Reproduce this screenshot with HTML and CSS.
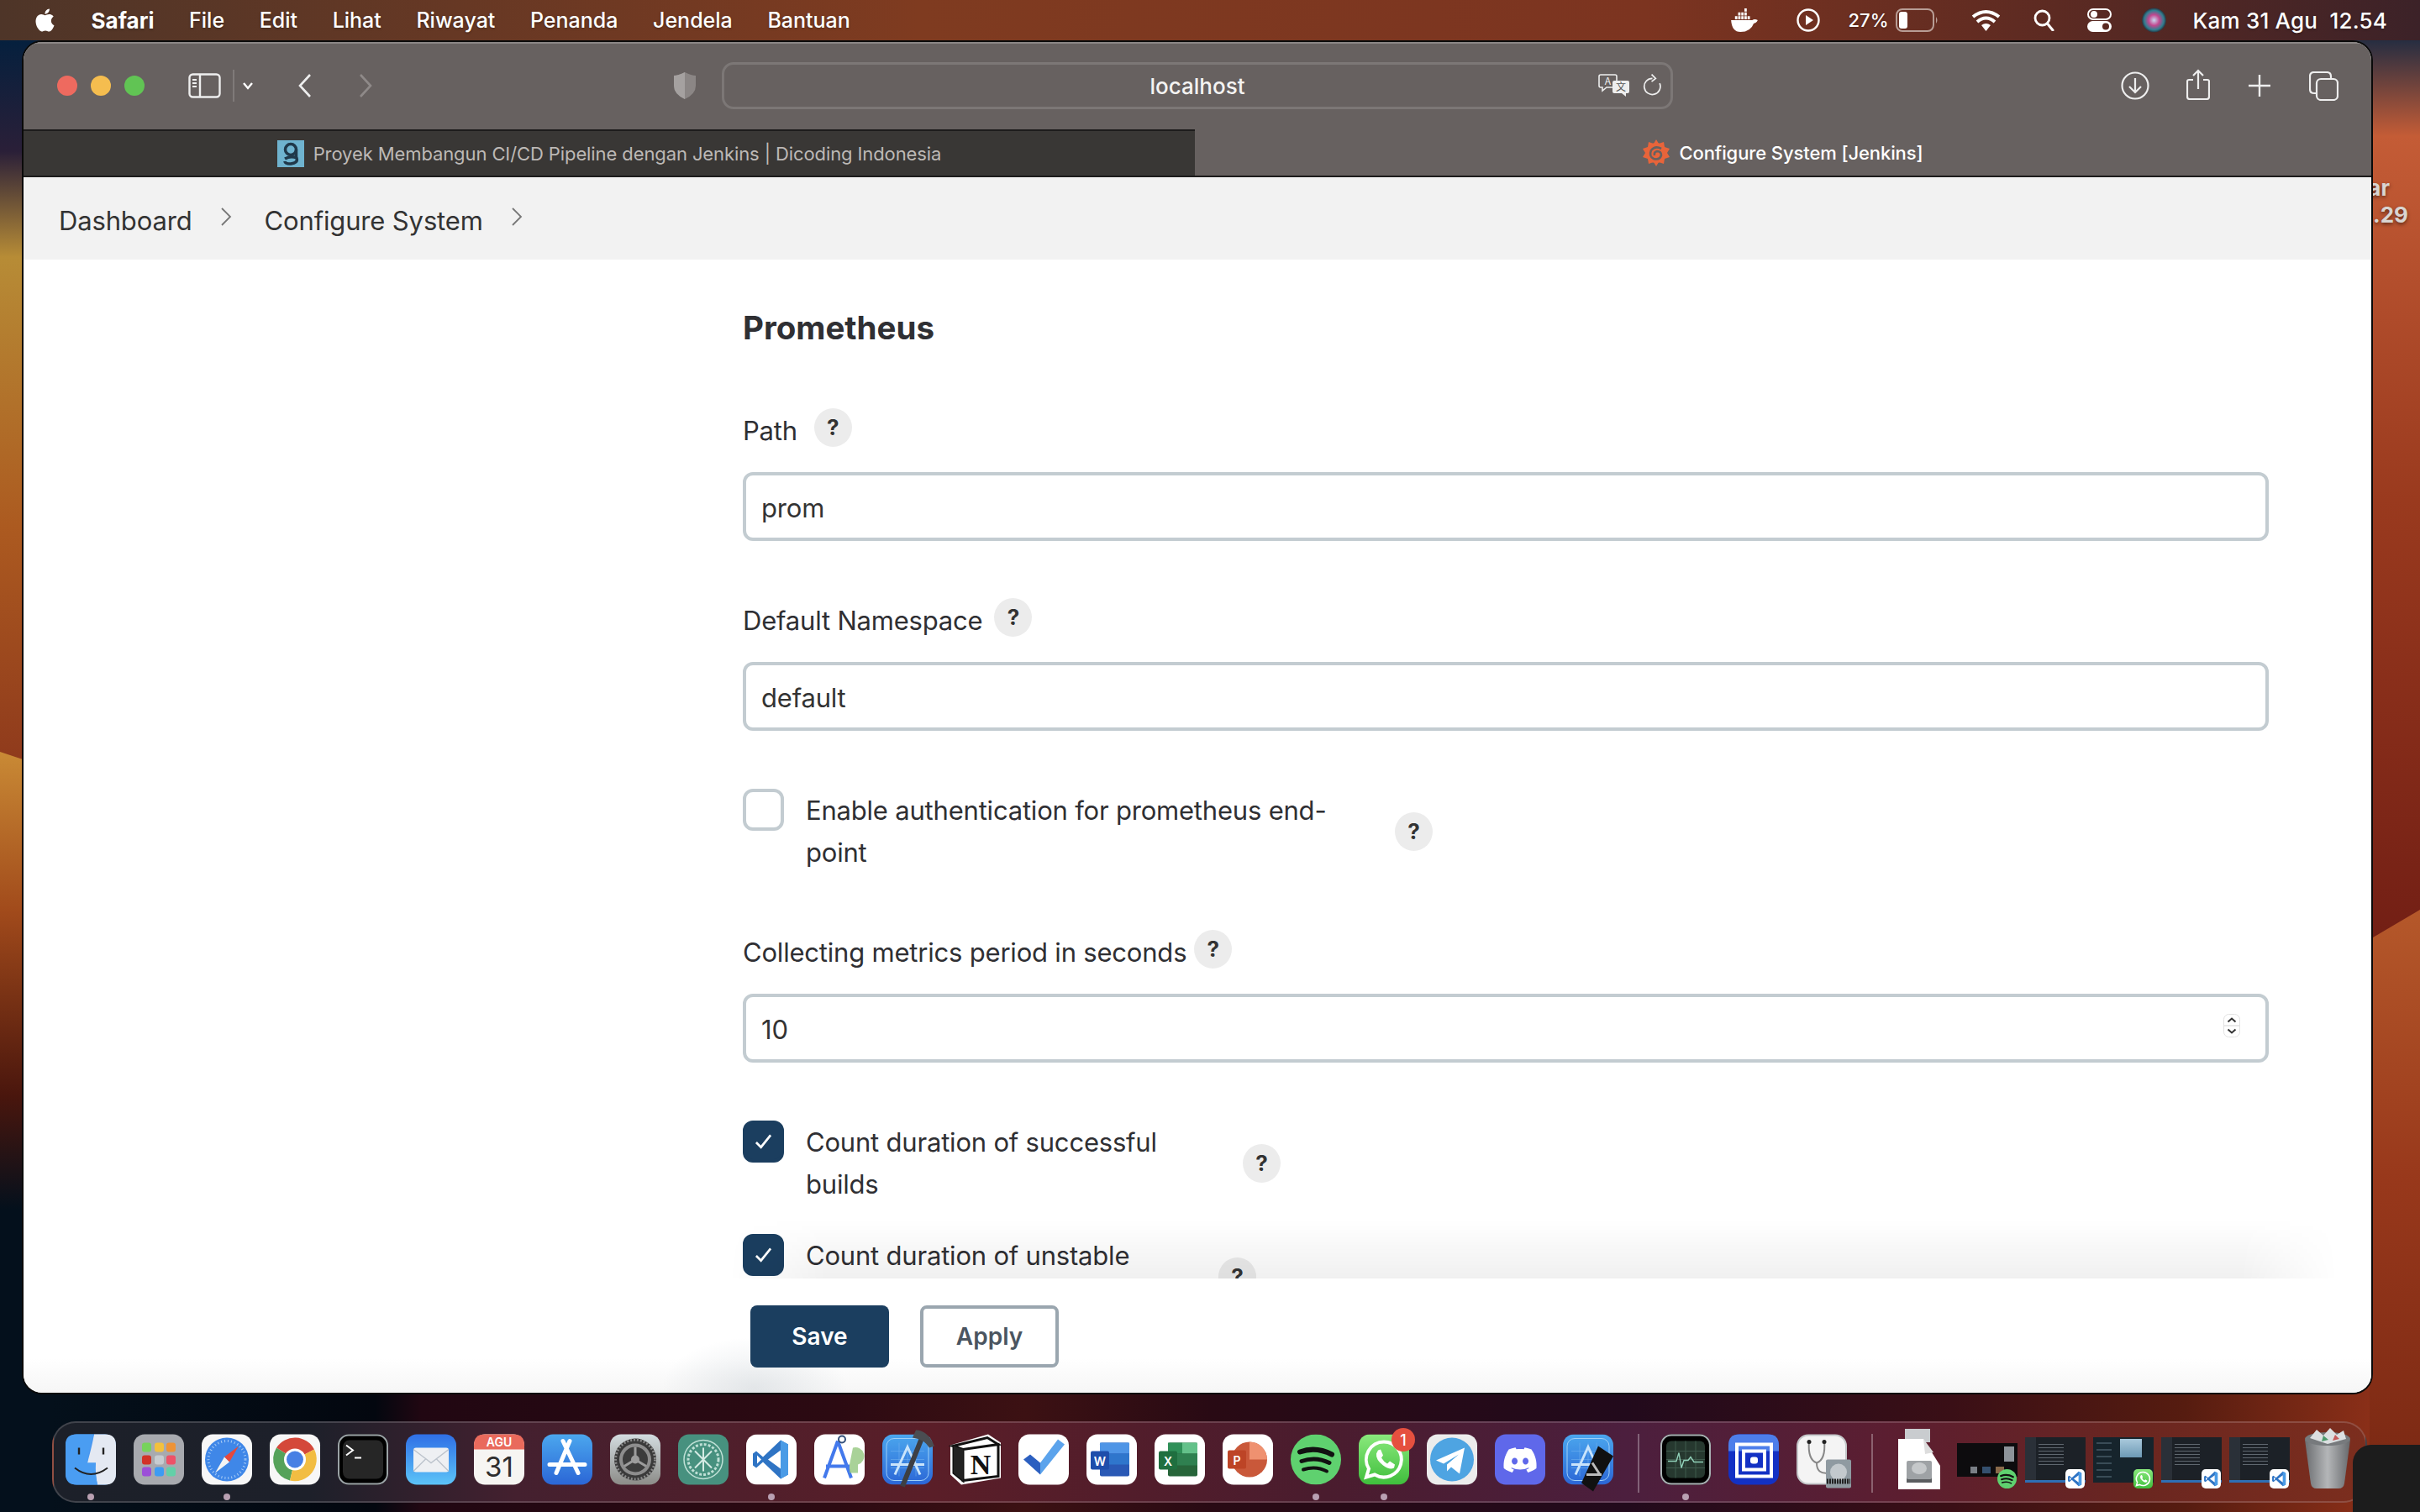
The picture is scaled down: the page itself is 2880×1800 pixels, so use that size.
FILE: index.html
```html
<!doctype html>
<html lang="en">
    <head>
        <meta charset="UTF-8" />
        <meta name="viewport" content="width=device-width, initial-scale=1.0" />
        <title>Configure System [Jenkins]</title>
        <link rel="stylesheet" href="styles.css">
    </head>
    <body>
        <!-- shared icons -->
        <svg class="sprite" width="0" height="0">
            <defs>
                <linearGradient id="blue-tile" x1="0" y1="0" x2="0" y2="1"><stop offset="0" stop-color="#4ba7ee"/><stop offset="1" stop-color="#2b66d6"/></linearGradient>
                <linearGradient id="wa-tile" x1="0" y1="0" x2="0" y2="1"><stop offset="0" stop-color="#8ae97d"/><stop offset="1" stop-color="#3fbe3c"/></linearGradient>
                <linearGradient id="mail-tile" x1="0" y1="0" x2="0" y2="1"><stop offset="0" stop-color="#2f6fe6"/><stop offset="1" stop-color="#5cc4f8"/></linearGradient>
                <linearGradient id="gear-tile" x1="0" y1="0" x2="0" y2="1"><stop offset="0" stop-color="#d3dce0"/><stop offset="1" stop-color="#8c8c88"/></linearGradient>
                <linearGradient id="can" x1="0" y1="0" x2="1" y2="0"><stop offset="0" stop-color="#6b6d70"/><stop offset=".5" stop-color="#b4b6b8"/><stop offset="1" stop-color="#66686b"/></linearGradient>
                <symbol id="i-vscode" viewBox="0 0 60 60">
                    <rect width="60" height="60" rx="13" fill="#fff"/>
                    <path d="M41 7 L50 12 V48 L41 53 L20 33 L12 40 L8 37 V23 L12 20 L20 27 Z" fill="#2f74c4"/>
                    <path d="M41 7 L50 12 V48 L41 53 V7 Z" fill="#4a9be6"/>
                    <path d="M41 19 V41 L26 30 Z" fill="#fff"/>
                    <path d="M13 25 V35 L18 30 Z" fill="#fff"/>
                </symbol>
                <symbol id="i-spotify" viewBox="0 0 60 60">
                    <circle cx="30" cy="30" r="30" fill="#5fd16f"/>
                    <path d="M11 21 Q30 14 49 24" fill="none" stroke="#111" stroke-width="6" stroke-linecap="round"/>
                    <path d="M13 32 Q30 26 46 34" fill="none" stroke="#111" stroke-width="5" stroke-linecap="round"/>
                    <path d="M15 42 Q30 37 43 44" fill="none" stroke="#111" stroke-width="4" stroke-linecap="round"/>
                </symbol>
                <symbol id="i-whatsapp" viewBox="0 0 60 60">
                    <rect width="60" height="60" rx="13" fill="url(#wa-tile)"/>
                    <path d="M30 9 A21 21 0 1 1 19 48 L9 51 L12 41 A21 21 0 0 1 30 9 Z" fill="none" stroke="#fff" stroke-width="4"/>
                    <path d="M23 19 L26 18 L29 25 L27 28 Q30 33 34 35 L37 32 L43 36 L42 40 Q37 43 29 37 Q20 30 21 23 Z" fill="#fff"/>
                </symbol>
                <symbol id="i-blueprint" viewBox="0 0 60 60">
                    <rect width="60" height="60" rx="13" fill="url(#blue-tile)"/>
                    <rect x="5" y="5" width="50" height="50" rx="9" fill="none" stroke="#9fd0f7" stroke-width="1"/>
                    <path d="M30 10 V50 M10 30 H50 M20 10 V50 M40 10 V50 M10 20 H50 M10 40 H50" stroke="#6fb0ee" stroke-width=".6"/>
                    <path d="M15 48 L30 15 L45 48 M10 36 H50" fill="none" stroke="#c9e4fb" stroke-width="3"/>
                </symbol>
            </defs>
        </svg>

        <!-- wallpaper -->
        <svg class="wallpaper" viewBox="0 0 2880 1800" preserveAspectRatio="none">
            <defs>
                <linearGradient id="wp-left" x1="0" y1="0" x2="0" y2="1"><stop offset="0" stop-color="#03203e"/><stop offset=".1" stop-color="#2a1f38"/><stop offset=".19" stop-color="#b78c36"/><stop offset=".42" stop-color="#ac5a20"/><stop offset=".62" stop-color="#8f3a1c"/></linearGradient>
                <linearGradient id="wp-left-low" x1="0" y1="0" x2="0" y2="1"><stop offset="0" stop-color="#c98a35"/><stop offset=".35" stop-color="#a14a1b"/><stop offset=".75" stop-color="#4a160d"/><stop offset="1" stop-color="#04101c"/></linearGradient>
                <linearGradient id="wp-right" x1="0" y1="0" x2="0" y2="1"><stop offset="0" stop-color="#1b2a42"/><stop offset=".11" stop-color="#c45c36"/><stop offset=".5" stop-color="#9a3a1e"/><stop offset="1" stop-color="#701d14"/></linearGradient>
                <linearGradient id="wp-right-low" x1="0" y1="0" x2="0" y2="1"><stop offset="0" stop-color="#b5582a"/><stop offset=".45" stop-color="#98381b"/><stop offset="1" stop-color="#772713"/></linearGradient>
                <linearGradient id="wp-bottom" x1="0" y1="0" x2="1" y2="0"><stop offset="0" stop-color="#04101b"/><stop offset=".14" stop-color="#03070f"/><stop offset=".16" stop-color="#210712"/><stop offset=".34" stop-color="#2c0a12"/><stop offset=".42" stop-color="#3c1113"/><stop offset=".5" stop-color="#290a14"/><stop offset=".68" stop-color="#220a1c"/><stop offset=".82" stop-color="#3a0f16"/><stop offset=".92" stop-color="#561c10"/><stop offset="1" stop-color="#8a2f18"/></linearGradient>
            </defs>
            <rect x="0" y="40" width="60" height="1400" fill="url(#wp-left)"/>
            <polygon points="0,895 60,915 60,1440 0,1440" fill="url(#wp-left-low)"/>
            <rect x="0" y="1440" width="60" height="360" fill="#04101c"/>
            <rect x="2780" y="40" width="100" height="1110" fill="url(#wp-right)"/>
            <polygon points="2780,1142 2880,1083 2880,1800 2780,1800" fill="url(#wp-right-low)"/>
            <rect x="60" y="1640" width="2760" height="160" fill="url(#wp-bottom)"/>
        </svg>

        <div class="desktop-label"><span>ar</span><span>.29</span></div>

        <header class="menubar">
            <nav class="menu">
                <svg class="apple" viewBox="0 0 24 24"><path fill="#fff" d="M12.152 6.896c-.948 0-2.415-1.078-3.96-1.04-2.04.027-3.91 1.183-4.961 3.014-2.117 3.675-.546 9.103 1.519 12.09 1.013 1.454 2.208 3.09 3.792 3.039 1.52-.065 2.09-.987 3.935-.987 1.831 0 2.35.987 3.96.948 1.637-.026 2.676-1.48 3.676-2.948 1.156-1.688 1.636-3.325 1.662-3.415-.039-.013-3.182-1.221-3.22-4.857-.026-3.04 2.48-4.494 2.597-4.559-1.429-2.09-3.623-2.324-4.39-2.376-2-.156-3.675 1.09-4.61 1.09zM15.53 3.83c.843-1.012 1.4-2.427 1.245-3.83-1.207.052-2.662.805-3.532 1.818-.78.896-1.454 2.338-1.273 3.714 1.338.104 2.715-.688 3.559-1.701"/></svg>
                <span class="menu-app">Safari</span>
                <span>File</span>
                <span>Edit</span>
                <span>Lihat</span>
                <span>Riwayat</span>
                <span>Penanda</span>
                <span>Jendela</span>
                <span>Bantuan</span>
            </nav>
            <div class="status">
                <svg class="st-docker" viewBox="0 0 36 30"><path fill="#fff" d="M1 15 H28 Q31 13 35 15 Q33 19 30 19 Q26 30 13 30 Q2 30 1 15 Z"/><path fill="#fff" d="M6 10h3v4H6zM10 10h3v4h-3zM14 10h3v4h-3zM18 10h3v4h-3zM22 10h3v4h-3zM10 5h3v4h-3zM14 5h3v4h-3zM18 5h3v4h-3zM18 0h3v4h-3z"/></svg>
                <svg class="st-play" viewBox="0 0 28 28"><circle cx="14" cy="14" r="12.5" fill="none" stroke="#fff" stroke-width="2.4"/><path fill="#fff" d="M11 8 L20 14 L11 20 Z"/></svg>
                <span class="st-pct">27%</span>
                <svg class="st-battery" viewBox="0 0 51 28"><rect x="1" y="1" width="44" height="26" rx="7" fill="none" stroke="#b89d95" stroke-width="2"/><rect x="4" y="4" width="10" height="20" rx="3" fill="#fff"/><path d="M48 10 Q51 14 48 18 Z" fill="#b89d95"/></svg>
                <svg class="st-wifi" viewBox="0 0 35 26"><path d="M2 9 Q17.500 -3 33 9 M7 15 Q17.500 6 28 15" fill="none" stroke="#fff" stroke-width="4"/><path fill="#fff" d="M12 19 Q17.500 15 23 19 L17.500 26 Z"/></svg>
                <svg class="st-search" viewBox="0 0 25 26"><circle cx="10.500" cy="10.500" r="8.500" fill="none" stroke="#fff" stroke-width="2.800"/><path d="M16.500 17 L23 25" stroke="#fff" stroke-width="3" stroke-linecap="round"/></svg>
                <svg class="st-control" viewBox="0 0 29 28"><rect x="1" y="1" width="27" height="12" rx="6" fill="none" stroke="#fff" stroke-width="2"/><circle cx="8" cy="7" r="4" fill="#fff"/><rect y="15" width="29" height="13" rx="6.500" fill="#fff"/><circle cx="22" cy="21.500" r="4" fill="#5a2a22"/></svg>
                <svg class="st-siri" viewBox="0 0 30 30"><defs><radialGradient id="siri"><stop offset="0" stop-color="#c8d8f0"/><stop offset=".45" stop-color="#c2478f"/><stop offset=".8" stop-color="#2f7f90"/><stop offset="1" stop-color="#2a3440"/></radialGradient></defs><circle cx="15" cy="15" r="15" fill="url(#siri)"/></svg>
                <span class="st-clock">Kam 31 Agu&nbsp; 12.54</span>
            </div>
        </header>

        <main class="window">
            <div class="toolbar">
                <div class="lights">
                    <span class="light light-red"></span>
                    <span class="light light-yellow"></span>
                    <span class="light light-green"></span>
                </div>
                <svg class="tb-sidebar" viewBox="0 0 39 30"><rect x="1.500" y="1.500" width="36" height="27" rx="4" fill="none" stroke="#eee" stroke-width="2.400"/><path d="M14 2 V28" stroke="#eee" stroke-width="2.400"/><path d="M5 8h5M5 12h5M5 16h5" stroke="#eee" stroke-width="2"/></svg>
                <span class="tb-divider"></span>
                <svg class="tb-caret" viewBox="0 0 14 10"><path d="M2 2 L7 8 L12 2" fill="none" stroke="#fff" stroke-width="2.400"/></svg>
                <svg class="tb-back" viewBox="0 0 18 30"><path d="M15 2 L3 15 L15 28" fill="none" stroke="#eee" stroke-width="2.600"/></svg>
                <svg class="tb-forward" viewBox="0 0 18 30"><path d="M3 2 L15 15 L3 28" fill="none" stroke="#8f8a89" stroke-width="2.600"/></svg>
                <svg class="tb-shield" viewBox="0 0 28 34"><path d="M14 1 Q22 5 27 5 V17 Q27 27 14 33 Q1 27 1 17 V5 Q6 5 14 1 Z" fill="#8b8685"/><path d="M14 1 Q6 5 1 5 V17 Q1 27 14 33 Z" fill="#a5a1a0"/></svg>
                <div class="urlbar">
                    <span class="url-text">localhost</span>
                    <svg class="url-translate" viewBox="0 0 38 28"><path d="M3 2 H20 Q22 2 22 4 V15 Q22 17 20 17 H10 L5 21 V17 H3 Q1 17 1 15 V4 Q1 2 3 2 Z" fill="none" stroke="#eee" stroke-width="1.600"/><text x="11.500" y="14" class="url-glyph" fill="#eee">A</text><path d="M19 9 H35 Q37 9 37 11 V22 Q37 24 35 24 H33 V28 L28 24 H19 Q17 24 17 22 V11 Q17 9 19 9 Z" fill="#eee"/><text x="27" y="21" class="url-glyph" fill="#555">文</text></svg>
                    <svg class="url-reload" viewBox="0 0 24 26"><path d="M12 5 A10 10 0 1 0 21 11" fill="none" stroke="#eee" stroke-width="1.800"/><path d="M11 0 L16 5 L11 9" fill="none" stroke="#eee" stroke-width="1.800"/></svg>
                </div>
                <div class="tb-actions">
                    <svg class="tb-download" viewBox="0 0 34 34"><circle cx="17" cy="17" r="15.500" fill="none" stroke="#eee" stroke-width="2.200"/><path d="M17 8 V25 M10 18 L17 25 L24 18" fill="none" stroke="#eee" stroke-width="2.200"/></svg>
                    <svg class="tb-share" viewBox="0 0 28 37"><path d="M8 13 H3 Q1 13 1 15 V33 Q1 36 4 36 H24 Q27 36 27 33 V15 Q27 13 25 13 H20" fill="none" stroke="#eee" stroke-width="2.200"/><path d="M14 24 V2 M8 8 L14 2 L20 8" fill="none" stroke="#eee" stroke-width="2.200"/></svg>
                    <svg class="tb-plus" viewBox="0 0 28 28"><path d="M14 1 V27 M1 14 H27" stroke="#eee" stroke-width="2.400"/></svg>
                    <svg class="tb-tabs" viewBox="0 0 35 35"><rect x="9" y="9" width="25" height="25" rx="5" fill="none" stroke="#eee" stroke-width="2.200"/><path d="M8 26 H6 Q1 26 1 21 V6 Q1 1 6 1 H21 Q26 1 26 6 V8" fill="none" stroke="#eee" stroke-width="2.200"/></svg>
                </div>
            </div>

            <div class="tabs">
                <div class="tab">
                    <svg class="favicon" viewBox="0 0 32 32"><rect width="32" height="32" fill="#6fb3cf"/><circle cx="16" cy="11" r="6.500" fill="none" stroke="#20384a" stroke-width="3.500"/><path d="M22.500 11 V20 M9 22 Q16 18 23 21 Q25 27 16 28 Q9 28 9 25" fill="none" stroke="#20384a" stroke-width="3.500"/></svg>
                    <span>Proyek Membangun CI/CD Pipeline dengan Jenkins | Dicoding Indonesia</span>
                </div>
                <div class="tab tab-active">
                    <svg class="favicon" viewBox="0 0 32 32"><circle cx="16" cy="16" r="12" fill="#e8643a"/><path d="M16 0 L19 5 L25 3 L26 9 L32 11 L29 16 L32 21 L26 23 L25 29 L19 27 L16 32 L13 27 L7 29 L6 23 L0 21 L3 16 L0 11 L6 9 L7 3 L13 5 Z" fill="#e8643a"/><path d="M22 11 Q15 7 10 13 Q7 20 13 23 Q20 25 22 19 Q22 14 17 14 Q13 15 14 19" fill="none" stroke="#676160" stroke-width="2.600"/></svg>
                    <span>Configure System [Jenkins]</span>
                </div>
            </div>

            <div class="breadcrumbs">
                <span>Dashboard</span>
                <svg class="crumb-sep" viewBox="0 0 14 22"><path d="M2 1 L12 11 L2 21" fill="none" stroke="#777" stroke-width="1.800"/></svg>
                <span>Configure System</span>
                <svg class="crumb-sep" viewBox="0 0 14 22"><path d="M2 1 L12 11 L2 21" fill="none" stroke="#777" stroke-width="1.800"/></svg>
            </div>

            <section class="content">
                <h2>Prometheus</h2>

                <div class="field">
                    <div class="field-label field-label-path"><label>Path</label><span class="help">?</span></div>
                    <input class="text-input" type="text" value="prom" />
                </div>

                <div class="field">
                    <div class="field-label field-label-ns"><label>Default Namespace</label><span class="help">?</span></div>
                    <input class="text-input" type="text" value="default" />
                </div>

                <div class="check-row check-row-auth">
                    <span class="check"></span>
                    <span class="check-label">Enable authentication for prometheus end-point</span>
                    <span class="help">?</span>
                </div>

                <div class="field">
                    <div class="field-label field-label-tight"><label>Collecting metrics period in seconds</label><span class="help">?</span></div>
                    <div class="number-wrap">
                        <input class="text-input" type="text" value="10" />
                        <svg class="spinner" viewBox="0 0 20 28"><rect x=".5" y=".5" width="19" height="27" rx="6" fill="#fff" stroke="#e2e2e2"/><path d="M1 14 H19" stroke="#e2e2e2" stroke-width="1.500"/><path d="M5.500 9.500 L10 5.500 L14.500 9.500 M5.500 18.500 L10 22.500 L14.500 18.500" fill="none" stroke="#333" stroke-width="2"/></svg>
                    </div>
                </div>

                <div class="check-row check-row-success">
                    <span class="check check-on"><svg viewBox="0 0 22 18"><path d="M2 10 L8 16 L20 1" fill="none" stroke="#fff" stroke-width="2.800"/></svg></span>
                    <span class="check-label">Count duration of successful builds</span>
                    <span class="help">?</span>
                </div>

                <div class="check-row check-row-unstable">
                    <span class="check check-on"><svg viewBox="0 0 22 18"><path d="M2 10 L8 16 L20 1" fill="none" stroke="#fff" stroke-width="2.800"/></svg></span>
                    <span class="check-label">Count duration of unstable builds</span>
                    <span class="help">?</span>
                </div>
            </section>

            <footer class="actions">
                <button class="btn btn-save" type="button">Save</button>
                <button class="btn btn-apply" type="button">Apply</button>
            </footer>
        </main>

        <div class="dock">
            <div class="dock-item on"><svg viewBox="0 0 60 60"><rect width="60" height="60" rx="13" fill="#4a97f0"/><path d="M47 0 Q60 0 60 13 V47 Q60 60 47 60 H38 Q34 40 36 34 H26 Q32 12 34 0 Z" fill="#e4e9f2"/><path d="M0 12 Q0 0 13 0 H34 Q28 14 26 34 H36 Q35 46 38 60 H13 Q0 60 0 47 Z" fill="#4a9df2"/><path d="M16 16 V24 M45 16 V24" stroke="#222" stroke-width="2.400"/><path d="M11 40 Q30 55 50 40" fill="none" stroke="#222" stroke-width="2"/></svg></div>
            <div class="dock-item"><svg viewBox="0 0 60 60"><rect width="60" height="60" rx="13" fill="#a8aaaf"/><rect x="10" y="10" width="11" height="11" rx="3" fill="#77d35c"/><rect x="25" y="10" width="11" height="11" rx="3" fill="#f3c13d"/><rect x="39" y="10" width="11" height="11" rx="3" fill="#ee9336"/><rect x="10" y="25" width="11" height="11" rx="3" fill="#d23228"/><rect x="25" y="25" width="11" height="11" rx="3" fill="#c7ccd0"/><rect x="39" y="25" width="11" height="11" rx="3" fill="#ee5268"/><rect x="10" y="39" width="11" height="11" rx="3" fill="#9c4fd8"/><rect x="25" y="39" width="11" height="11" rx="3" fill="#3d9bf3"/><rect x="39" y="39" width="11" height="11" rx="3" fill="#63d0a8"/></svg></div>
            <div class="dock-item on"><svg viewBox="0 0 60 60"><rect width="60" height="60" rx="13" fill="#f7f7f7"/><circle cx="30" cy="30" r="26" fill="#3f87e8"/><circle cx="30" cy="30" r="22" fill="none" stroke="#a8ccf5" stroke-width="3" stroke-dasharray="1 3"/><path d="M44 14 L27 27 L33 33 Z" fill="#e6483d"/><path d="M16 46 L27 27 L33 33 Z" fill="#f4f4f4"/></svg></div>
            <div class="dock-item"><svg viewBox="0 0 60 60"><rect width="60" height="60" rx="13" fill="#f7f7f7"/><path d="M30 30 L8 16 A26 26 0 0 1 53 18 Z" fill="#d4483a"/><path d="M30 30 L8 16 A26 26 0 0 0 24 55 Z" fill="#55a25a"/><path d="M30 30 L53 18 A26 26 0 0 1 24 55 Z" fill="#f2bd42"/><circle cx="30" cy="30" r="13" fill="#fff"/><circle cx="30" cy="30" r="10" fill="#4880e4"/></svg></div>
            <div class="dock-item"><svg viewBox="0 0 60 60"><rect width="60" height="60" rx="13" fill="#000"/><rect x="1" y="1" width="58" height="58" rx="12" fill="none" stroke="#9ba3a6" stroke-width="2"/><rect x="6" y="7" width="48" height="46" rx="8" fill="#262626"/><path d="M10 13 L18 19 L10 25" fill="none" stroke="#fff" stroke-width="2"/><path d="M20 28 H28" stroke="#fff" stroke-width="2"/></svg></div>
            <div class="dock-item"><svg viewBox="0 0 60 60"><rect width="60" height="60" rx="13" fill="url(#mail-tile)"/><rect x="9" y="16" width="42" height="29" rx="3" fill="#eef0f3"/><path d="M9 18 L30 34 L51 18 M9 44 L24 29 M51 44 L36 29" fill="none" stroke="#bcc3cc" stroke-width="1.400"/></svg></div>
            <div class="dock-item"><svg viewBox="0 0 60 60"><rect width="60" height="60" rx="13" fill="#f6f5f2"/><path d="M0 18 V13 Q0 0 13 0 H47 Q60 0 60 13 V18 Z" fill="#e96a5c"/><text x="30" y="14" class="cal-month">AGU</text><text x="30" y="50" class="cal-day">31</text></svg></div>
            <div class="dock-item"><svg viewBox="0 0 60 60"><rect width="60" height="60" rx="13" fill="url(#blue-tile)"/><path d="M33 8 L17 46 M25 8 L43 46 M9 36 H51" fill="none" stroke="#fff" stroke-width="5" stroke-linecap="round"/></svg></div>
            <div class="dock-item"><svg viewBox="0 0 60 60"><rect width="60" height="60" rx="13" fill="url(#gear-tile)"/><circle cx="30" cy="30" r="25" fill="#3a3a3a"/><circle cx="30" cy="30" r="23.500" fill="none" stroke="#8a8a8a" stroke-width="3" stroke-dasharray="2 2"/><circle cx="30" cy="30" r="19" fill="#8d8d8d"/><circle cx="30" cy="30" r="15" fill="#3c3c3c"/><path d="M30 30 V15 M30 30 L17 38 M30 30 L43 38" stroke="#9c9c9c" stroke-width="3"/><circle cx="30" cy="30" r="5" fill="#9c9c9c"/></svg></div>
            <div class="dock-item"><svg viewBox="0 0 60 60"><rect width="60" height="60" rx="13" fill="#47917f"/><circle cx="30" cy="30" r="23" fill="none" stroke="#bfe0d6" stroke-width="1.500"/><circle cx="30" cy="30" r="18" fill="none" stroke="#bfe0d6" stroke-width="3" stroke-dasharray="3 2"/><path d="M20 20 L40 40 M40 20 L20 40 M30 16 V44" stroke="#d5ebe4" stroke-width="2"/></svg></div>
            <div class="dock-item on"><svg viewBox="0 0 60 60"><use href="#i-vscode"/></svg></div>
            <div class="dock-item"><svg viewBox="0 0 60 60"><rect width="60" height="60" rx="13" fill="#fff"/><path d="M28 8 L12 52 M28 8 L44 52 M14 38 H42" fill="none" stroke="#4379ec" stroke-width="4"/><circle cx="33" cy="6" r="4" fill="none" stroke="#33507a" stroke-width="2"/><path d="M46 16 A10 10 0 0 1 52 36 V46 H42 V36 Z" fill="#93c77e" opacity=".8"/></svg></div>
            <div class="dock-item"><svg viewBox="0 0 60 60"><use href="#i-blueprint"/><path d="M48 2 L24 62" stroke="#3d3f44" stroke-width="6"/><path d="M40 -5 Q54 -5 62 14 L56 16 Q50 6 36 4 Z" fill="#4a4d52"/></svg></div>
            <div class="dock-item"><svg viewBox="0 0 60 60"><path d="M0 13 L45 0 L60 10 V52 L13 60 L0 48 Z" fill="#fff"/><path d="M3 14 L44 4 L57 12 L15 18 Z M15 18 V55 L4 46 V14 Z M15 18 L57 12 V50 L15 55 Z" fill="none" stroke="#111" stroke-width="3"/><path d="M15 18 V55 L4 46 V14 Z" fill="#222"/><text x="36" y="47" class="notion-n">N</text></svg></div>
            <div class="dock-item"><svg viewBox="0 0 60 60"><rect width="60" height="60" rx="13" fill="#fff"/><path d="M26 48 L55 12 L47 6 L26 34 Z" fill="#5ba3ec"/><path d="M6 30 L14 24 L26 34 V48 Z" fill="#2b5fc0"/></svg></div>
            <div class="dock-item"><svg viewBox="0 0 60 60"><rect width="60" height="60" rx="13" fill="#fff"/><rect x="16" y="10" width="35" height="40" rx="2" fill="#2a59b5"/><rect x="16" y="10" width="35" height="13" fill="#4f95e6"/><rect x="16" y="23" width="35" height="13" fill="#2f76cc"/><rect x="5" y="20" width="22" height="22" rx="2" fill="#1e4eab"/><text x="16" y="37" class="office-letter">W</text></svg></div>
            <div class="dock-item"><svg viewBox="0 0 60 60"><rect width="60" height="60" rx="13" fill="#fff"/><rect x="16" y="10" width="35" height="40" rx="2" fill="#27653a"/><rect x="33" y="10" width="18" height="13" fill="#64c18a"/><rect x="16" y="10" width="17" height="13" fill="#2f9058"/><rect x="16" y="23" width="35" height="14" fill="#2f8050"/><rect x="5" y="20" width="22" height="22" rx="2" fill="#1f6f3f"/><text x="16" y="37" class="office-letter">X</text></svg></div>
            <div class="dock-item"><svg viewBox="0 0 60 60"><rect width="60" height="60" rx="13" fill="#fff"/><circle cx="32" cy="30" r="21" fill="#c9583a"/><path d="M32 9 A21 21 0 0 1 53 30 H32 Z" fill="#ef9170"/><rect x="6" y="19" width="22" height="22" rx="2" fill="#bd4426"/><text x="17" y="36" class="office-letter">P</text></svg></div>
            <div class="dock-item on"><svg viewBox="0 0 60 60"><use href="#i-spotify"/></svg></div>
            <div class="dock-item on"><svg viewBox="0 0 60 60"><use href="#i-whatsapp"/></svg><span class="badge">1</span></div>
            <div class="dock-item"><svg viewBox="0 0 60 60"><rect width="60" height="60" rx="13" fill="#ececec"/><circle cx="30" cy="30" r="26" fill="#4ea4e2"/><path d="M11 31 L45 16 L39 47 L29 39 L24 44 L24 36 L38 24 L20 35 Z" fill="#fff"/></svg></div>
            <div class="dock-item"><svg viewBox="0 0 60 60"><rect width="60" height="60" rx="13" fill="#5f68ea"/><g transform="translate(10.500 11) scale(1.630)"><path fill="#fff" d="M20.317 4.3698a19.7913 19.7913 0 00-4.8851-1.5152.0741.0741 0 00-.0785.0371c-.211.3753-.4447.8648-.6083 1.2495-1.8447-.2762-3.68-.2762-5.4868 0-.1636-.3933-.4058-.8742-.6177-1.2495a.077.077 0 00-.0785-.037 19.7363 19.7363 0 00-4.8852 1.515.0699.0699 0 00-.0321.0277C.5334 9.0458-.319 13.5799.0992 18.0578a.0824.0824 0 00.0312.0561c2.0528 1.5076 4.0413 2.4228 5.9929 3.0294a.0777.0777 0 00.0842-.0276c.4616-.6304.8731-1.2952 1.226-1.9942a.076.076 0 00-.0416-.1057c-.6528-.2476-1.2743-.5495-1.8722-.8923a.077.077 0 01-.0076-.1277c.1258-.0943.2517-.1923.3718-.2914a.0743.0743 0 01.0776-.0105c3.9278 1.7933 8.18 1.7933 12.0614 0a.0739.0739 0 01.0785.0095c.1202.099.246.1981.3728.2924a.077.077 0 01-.0066.1276 12.2986 12.2986 0 01-1.873.8914.0766.0766 0 00-.0407.1067c.3604.698.7719 1.3628 1.225 1.9932a.076.076 0 00.0842.0286c1.961-.6067 3.9495-1.5219 6.0023-3.0294a.077.077 0 00.0313-.0552c.5004-5.177-.8382-9.6739-3.5485-13.6604a.061.061 0 00-.0312-.0286zM8.02 15.3312c-1.1825 0-2.1569-1.0857-2.1569-2.419 0-1.3332.9555-2.4189 2.157-2.4189 1.2108 0 2.1757 1.0952 2.1568 2.419 0 1.3332-.9555 2.4189-2.1569 2.4189zm7.9748 0c-1.1825 0-2.1569-1.0857-2.1569-2.419 0-1.3332.9554-2.4189 2.1569-2.4189 1.2108 0 2.1757 1.0952 2.1568 2.419 0 1.3332-.946 2.4189-2.1568 2.4189Z"/></g></svg></div>
            <div class="dock-item"><svg viewBox="0 0 60 60"><use href="#i-blueprint"/><path d="M42 14 L60 26 L36 68 L22 58 Z" fill="#111"/><path d="M35 34 L44 48 M28 48 H46" stroke="#bbb" stroke-width="3"/></svg></div>
            <span class="dock-sep"></span>
            <div class="dock-item on"><svg viewBox="0 0 60 60"><rect width="60" height="60" rx="13" fill="#000"/><rect x="1" y="1" width="58" height="58" rx="12" fill="none" stroke="#a9b1b3" stroke-width="2"/><rect x="7" y="8" width="46" height="44" rx="6" fill="#26382f"/><path d="M7 20H53M7 30H53M7 40H53M18 8V52M30 8V52M42 8V52" stroke="#3f5a4d" stroke-width="1"/><path d="M9 32 H19 L22 22 L25 40 L28 31 H33 L36 27 L40 33 H51" fill="none" stroke="#90d0b8" stroke-width="1.400"/></svg></div>
            <div class="dock-item"><svg viewBox="0 0 60 60"><rect width="60" height="60" rx="13" fill="#1331c4"/><path d="M0 13 Q0 0 13 0 H47 Q60 0 60 13 V20 H0 Z" fill="#4d7eea"/><rect x="10" y="12" width="41" height="38" fill="none" stroke="#fff" stroke-width="4"/><rect x="18" y="20" width="25" height="22" fill="none" stroke="#fff" stroke-width="4"/><rect x="26" y="27" width="9" height="8" rx="3" fill="#fff"/></svg></div>
            <div class="dock-item"><svg viewBox="0 0 60 60"><rect x="1" y="1" width="58" height="58" rx="13" fill="#f4f4f4" stroke="#c4c7c9" stroke-width="2"/><path d="M15 8 Q13 30 24 34 Q35 30 33 8 M24 34 Q24 48 38 46" fill="none" stroke="#888" stroke-width="2"/><circle cx="15" cy="9" r="2.500" fill="#222"/><circle cx="33" cy="9" r="2.500" fill="#222"/><rect x="35" y="30" width="30" height="34" rx="2" fill="#8f9aa1"/><circle cx="50" cy="45" r="10" fill="#c3c9cd"/><path d="M36 56 H64" stroke="#222" stroke-width="6" stroke-dasharray="2 1"/></svg></div>
            <span class="dock-sep"></span>
            <div class="dock-item dock-item-tall"><svg class="dock-doc" viewBox="0 0 50 72"><rect x="8" y="0" width="30" height="16" fill="#c9cccf"/><path d="M0 12 H30 L50 44 V72 H0 Z" fill="#fff"/><path d="M30 12 L42 28 L32 30 Z" fill="#ddd"/><rect x="10" y="54" width="30" height="10" fill="#5a5d60"/><rect x="10" y="38" width="30" height="22" rx="2" fill="#9ea2a5"/><ellipse cx="25" cy="47" rx="9" ry="7" fill="#c5c8ca"/></svg></div>
            <div class="dock-item dock-thumb">
                <span class="thumb thumb-short"></span>
                <svg class="thumb-badge" viewBox="0 0 60 60"><use href="#i-spotify"/></svg>
            </div>
            <div class="dock-item dock-thumb">
                <span class="thumb thumb-code"></span>
                <svg class="thumb-badge" viewBox="0 0 60 60"><use href="#i-vscode"/></svg>
            </div>
            <div class="dock-item dock-thumb">
                <span class="thumb thumb-chat"></span>
                <svg class="thumb-badge" viewBox="0 0 60 60"><use href="#i-whatsapp"/></svg>
            </div>
            <div class="dock-item dock-thumb">
                <span class="thumb thumb-code"></span>
                <svg class="thumb-badge" viewBox="0 0 60 60"><use href="#i-vscode"/></svg>
            </div>
            <div class="dock-item dock-thumb">
                <span class="thumb thumb-code"></span>
                <svg class="thumb-badge" viewBox="0 0 60 60"><use href="#i-vscode"/></svg>
            </div>
            <div class="dock-item dock-item-tall"><svg class="dock-trash" viewBox="0 0 54 72"><path d="M0 14 H54 L47 66 Q46 72 40 72 H14 Q8 72 7 66 Z" fill="url(#can)"/><ellipse cx="27" cy="13" rx="27" ry="8" fill="#777a7d"/><path d="M6 12 L14 2 L22 9 L30 0 L38 8 L46 3 L49 13 L27 19 Z" fill="#dcdfe1"/><path d="M22 9 L28 14 L20 16 Z" fill="#4d9a6c"/><path d="M36 8 L41 13 L33 15 Z" fill="#c55a5a"/></svg></div>
        </div>

        <div class="corner-panel"></div>
    </body>
</html>
```

FILE: styles.css
```css
* {
    margin: 0;
    padding: 0;
    box-sizing: border-box;
}

body {
    position: relative;
    width: 2880px;
    height: 1800px;
    overflow: hidden;
    background-color: #04101c;
    font-family: 'Inter', 'Noto Sans', sans-serif;
    color: #2f2f33;
}

.sprite {
    position: absolute;
}

svg {
    display: block;
    flex: none;
}

/* Desktop background */
.wallpaper {
    position: absolute;
    top: 0;
    left: 0;
    width: 2880px;
    height: 1800px;
}

.desktop-label {
    position: absolute;
    top: 208px;
    right: 14px;
    display: flex;
    flex-direction: column;
    align-items: flex-end;
    font-size: 26px;
    line-height: 32px;
    font-weight: 700;
    color: #d9d5d2;
    text-shadow: 0 2px 4px rgba(0, 0, 0, 0.5);
}

.desktop-label span:first-child {
    margin-right: 22px;
}

/* Menu bar */
.menubar {
    position: relative;
    height: 48px;
    display: flex;
    justify-content: space-between;
    align-items: center;
    padding: 0 39px 0 40px;
    background: linear-gradient(90deg, #4e3528 0%, #7f3b20 38%, #7c3420 68%, #5c2a22 85%, #3c2228 100%);
    color: #fff;
    font-size: 25px;
    font-weight: 500;
    text-shadow: 0 1px 3px rgba(0, 0, 0, 0.35);
}

.menu {
    display: flex;
    align-items: center;
    gap: 41.6px;
}

.apple {
    width: 27px;
    height: 32px;
}

.menu-app {
    font-size: 26px;
    font-weight: 700;
}

.status {
    display: flex;
    align-items: center;
}

.st-docker {
    width: 36px;
    height: 28px;
}

.st-play {
    width: 28px;
    height: 28px;
    margin-left: 44px;
}

.st-pct {
    margin-left: 34px;
    font-size: 22px;
}

.st-battery {
    width: 51px;
    height: 28px;
    margin-left: 8px;
}

.st-wifi {
    width: 35px;
    height: 26px;
    margin-left: 39px;
}

.st-search {
    width: 25px;
    height: 26px;
    margin-left: 39px;
}

.st-control {
    width: 29px;
    height: 28px;
    margin-left: 39px;
}

.st-siri {
    width: 29px;
    height: 30px;
    margin-left: 36px;
}

.st-clock {
    margin-left: 32px;
    font-size: 26px;
    letter-spacing: 0.2px;
}

/* Browser window */
.window {
    position: relative;
    width: 2794px;
    height: 1608px;
    margin: 2px 0 0 28px;
    display: flex;
    flex-direction: column;
    overflow: hidden;
    background-color: #fff;
    border-radius: 22px;
    box-shadow: 0 0 0 2px #0a0a0a;
}

.toolbar {
    height: 104px;
    flex: none;
    display: flex;
    align-items: center;
    padding-left: 40px;
    padding-bottom: 2px;
    background-color: #676160;
    border-top: 2px solid #8b8685;
}

.lights {
    display: flex;
    gap: 16px;
}

.light {
    width: 24px;
    height: 24px;
    border-radius: 50%;
}

.light-red {
    background-color: #ee6a5f;
}

.light-yellow {
    background-color: #f5bd4f;
}

.light-green {
    background-color: #61c454;
}

.tb-sidebar {
    width: 39px;
    height: 30px;
    margin-left: 52px;
}

.tb-divider {
    width: 2px;
    height: 38px;
    margin-left: 14px;
    background-color: #7f7a79;
}

.tb-caret {
    width: 14px;
    height: 10px;
    margin-left: 9px;
}

.tb-back {
    width: 18px;
    height: 30px;
    margin-left: 52px;
}

.tb-forward {
    width: 18px;
    height: 30px;
    margin-left: 54px;
}

.tb-shield {
    width: 28px;
    height: 34px;
    margin-left: 357px;
}

.urlbar {
    position: relative;
    width: 1132px;
    height: 56px;
    margin-left: 30px;
    display: flex;
    align-items: center;
    justify-content: center;
    border: 3px solid #7c7776;
    border-radius: 14px;
}

.url-text {
    font-size: 26px;
    font-weight: 500;
    color: #f4f3f2;
}

.url-translate {
    position: absolute;
    top: 10px;
    right: 48px;
    width: 38px;
    height: 28px;
}

.url-glyph {
    font-size: 12px;
    text-anchor: middle;
    font-family: 'Noto Sans CJK SC', 'Inter', sans-serif;
}

.url-reload {
    position: absolute;
    top: 11px;
    right: 10px;
    width: 23px;
    height: 26px;
}

.tb-actions {
    margin-left: 533px;
    display: flex;
    align-items: center;
}

.tb-download {
    width: 34px;
    height: 34px;
}

.tb-share {
    width: 28px;
    height: 37px;
    margin-left: 44px;
    margin-top: -4px;
}

.tb-plus {
    width: 28px;
    height: 28px;
    margin-left: 45px;
}

.tb-tabs {
    width: 35px;
    height: 35px;
    margin-left: 45px;
}

.tabs {
    height: 57px;
    flex: none;
    display: flex;
    background-color: #1d1c1c;
    font-size: 22px;
    letter-spacing: -0.1px;
}

.tab {
    width: 1394px;
    display: flex;
    align-items: center;
    justify-content: center;
    gap: 11px;
    margin: 2px 0;
    background-color: #393735;
    color: #bdb9b6;
}

.tab-active {
    flex: 1;
    margin-top: 0;
    background-color: #676160;
    color: #fff;
    font-weight: 500;
}

.favicon {
    width: 32px;
    height: 32px;
}

.breadcrumbs {
    height: 98px;
    flex: none;
    display: flex;
    align-items: center;
    padding: 4px 0 0 42px;
    background-color: #f2f2f2;
    font-size: 31px;
    letter-spacing: -0.15px;
    color: #333;
}

.crumb-sep {
    width: 14px;
    height: 22px;
    margin: -8px 39px 0 33px;
}

/* Form */
.content {
    position: relative;
    flex: 1;
    overflow: hidden;
    padding: 50px 122px 0 856px;
    font-size: 31px;
    letter-spacing: -0.2px;
    line-height: 50px;
}

.content::after {
    content: '';
    position: absolute;
    right: 40px;
    bottom: 0;
    left: 840px;
    height: 70px;
    background: linear-gradient(180deg, rgba(0, 0, 0, 0), rgba(0, 0, 0, 0.06));
    -webkit-mask-image: linear-gradient(90deg, transparent, #000 6%, #000 94%, transparent);
    mask-image: linear-gradient(90deg, transparent, #000 6%, #000 94%, transparent);
}

h2 {
    height: 60px;
    margin-bottom: 68px;
    font-size: 38.5px;
    letter-spacing: 0;
    line-height: 63px;
    font-weight: 700;
}

.field {
    margin-bottom: 69px;
}

.field-label {
    height: 50px;
    margin-bottom: 25px;
    display: flex;
    align-items: center;
    gap: 18px;
    padding-top: 1px;
}

.field-label-path {
    gap: 20px;
}

.field-label-ns {
    gap: 14px;
}

.field-label-tight {
    gap: 9px;
}

.field-label .help {
    margin-top: -7px;
}

.help {
    width: 45px;
    height: 46px;
    flex: none;
    display: flex;
    align-items: center;
    justify-content: center;
    border-radius: 50%;
    background-color: #ececec;
    font-size: 26px;
    letter-spacing: 0;
    line-height: 1;
    font-weight: 700;
    color: #333;
}

.text-input {
    display: block;
    width: 100%;
    height: 82px;
    padding: 3px 18px 0;
    border: 4px solid #c3ccd1;
    border-radius: 12px;
    background-color: #fff;
    font-family: inherit;
    font-size: 31px;
    letter-spacing: -0.2px;
    color: #333;
}

.number-wrap {
    position: relative;
}

.spinner {
    position: absolute;
    top: 24px;
    right: 34px;
    width: 20px;
    height: 28px;
}

.check-row {
    display: flex;
    align-items: center;
    margin-bottom: 68px;
}

.check {
    width: 49px;
    height: 50px;
    flex: none;
    align-self: flex-start;
    display: flex;
    align-items: center;
    justify-content: center;
    margin-right: 26px;
    border: 4px solid #c3ccd1;
    border-radius: 12px;
}

.check-on {
    border-color: #1b3e5f;
    background-color: #1b3e5f;
}

.check-on svg {
    width: 21px;
    height: 18px;
}

.check-label {
    margin-right: 25px;
    padding-top: 1px;
}

.check-row-auth .check-label {
    width: 676px;
}

.check-row-success {
    margin-bottom: 34px;
}

.check-row-success .check-label {
    width: 495px;
}

.check-row-unstable .check-label {
    width: 466px;
}

/* Bottom bar */
.actions {
    height: 136px;
    flex: none;
    display: flex;
    gap: 37px;
    padding: 32px 0 0 865px;
    background:
        radial-gradient(ellipse 110px 60px at 870px 130px, rgba(180, 190, 198, 0.3), rgba(255, 255, 255, 0)),
        linear-gradient(180deg, #fff 70%, #f6f6f6 100%);
}

.btn {
    width: 165px;
    height: 74px;
    border-radius: 8px;
    font-family: inherit;
    font-size: 28px;
    font-weight: 600;
}

.btn-save {
    border: none;
    background-color: #1b3e5f;
    color: #fff;
}

.btn-apply {
    border: 4px solid #9aa6af;
    background-color: #fff;
    color: #4b5560;
}

/* Dock */
.dock {
    position: relative;
    width: 2755px;
    height: 97px;
    margin: 34px 0 0 62px;
    display: flex;
    align-items: flex-start;
    gap: 21px;
    padding: 13px 0 0 14px;
    border: 2px solid rgba(255, 255, 255, 0.16);
    border-radius: 28px;
    background: linear-gradient(90deg, #1c2029 0%, #1d202a 11%, #44202f 20%, #5a1e28 38%, #4a1c2e 55%, #4c1f3e 68%, #5c1e30 80%, #6a2620 90%, #7c2e1e 100%);
}

.dock-item {
    position: relative;
    width: 60px;
    height: 61px;
    flex: none;
}

.dock-item > svg {
    width: 60px;
    height: 61px;
    overflow: visible;
}

.dock-item.on::after {
    content: '';
    position: absolute;
    bottom: -18px;
    left: 26px;
    width: 8px;
    height: 8px;
    border-radius: 50%;
    background-color: #b9a0b2;
}

.badge {
    position: absolute;
    top: -7px;
    right: -7px;
    width: 28px;
    height: 28px;
    display: flex;
    align-items: center;
    justify-content: center;
    border-radius: 50%;
    background-color: #e5503f;
    color: #fff;
    font-size: 18px;
    font-weight: 500;
}

.dock-sep {
    width: 2px;
    height: 70px;
    flex: none;
    margin: 0 4px 0 8px;
    background-color: rgba(255, 255, 255, 0.3);
}

.cal-month {
    font-size: 14px;
    font-weight: 600;
    fill: #fff;
    text-anchor: middle;
}

.cal-day {
    font-size: 33px;
    fill: #2e2e2e;
    text-anchor: middle;
}

.notion-n {
    font-family: 'Liberation Serif', serif;
    font-size: 34px;
    font-weight: 700;
    fill: #111;
    text-anchor: middle;
}

.office-letter {
    font-size: 14px;
    font-weight: 600;
    fill: #fff;
    text-anchor: middle;
}

.dock-item > .dock-doc {
    width: 50px;
    height: 72px;
    margin: -6px 0 0 5px;
}

.dock-item > .dock-trash {
    width: 54px;
    height: 72px;
    margin: -7px 0 0 3px;
}

/* Window thumbnails in the dock */
.thumb {
    position: absolute;
    top: 4px;
    left: -6px;
    width: 72px;
    height: 54px;
    background-color: #1c2127;
}

.thumb-code {
    background:
        linear-gradient(#2e6fb5, #2e6fb5) left bottom / 100% 3px no-repeat,
        repeating-linear-gradient(180deg, rgba(150, 160, 170, 0.55) 0 1px, transparent 1px 4px) 16px 8px / 30px 26px no-repeat,
        linear-gradient(#2a3038, #2a3038) left top / 13px 100% no-repeat,
        #1c2127;
}

.thumb-short {
    top: 11px;
    height: 40px;
    background:
        linear-gradient(90deg, #7a7f86 0 8px, transparent 8px 14px, #35506e 14px 24px, transparent 24px 30px, #8a6a4a 30px 40px, transparent 40px) 16px 28px / 50px 8px no-repeat,
        linear-gradient(#8d9399, #8d9399) 56px 4px / 12px 18px no-repeat,
        #0d0c0e;
}

.thumb-chat {
    background:
        linear-gradient(#a9c9dc, #6d9ab5) 32px 2px / 26px 22px no-repeat,
        repeating-linear-gradient(180deg, #3a4c57 0 2px, transparent 2px 8px) 4px 6px / 18px 42px no-repeat,
        #16242c;
}

.dock-item > .thumb-badge {
    position: absolute;
    top: 42px;
    right: -5px;
    width: 23px;
    height: 23px;
}

.corner-panel {
    position: absolute;
    top: 1720px;
    left: 2800px;
    width: 80px;
    height: 80px;
    background-color: #1c1c1c;
    border-top-left-radius: 22px;
}
```
